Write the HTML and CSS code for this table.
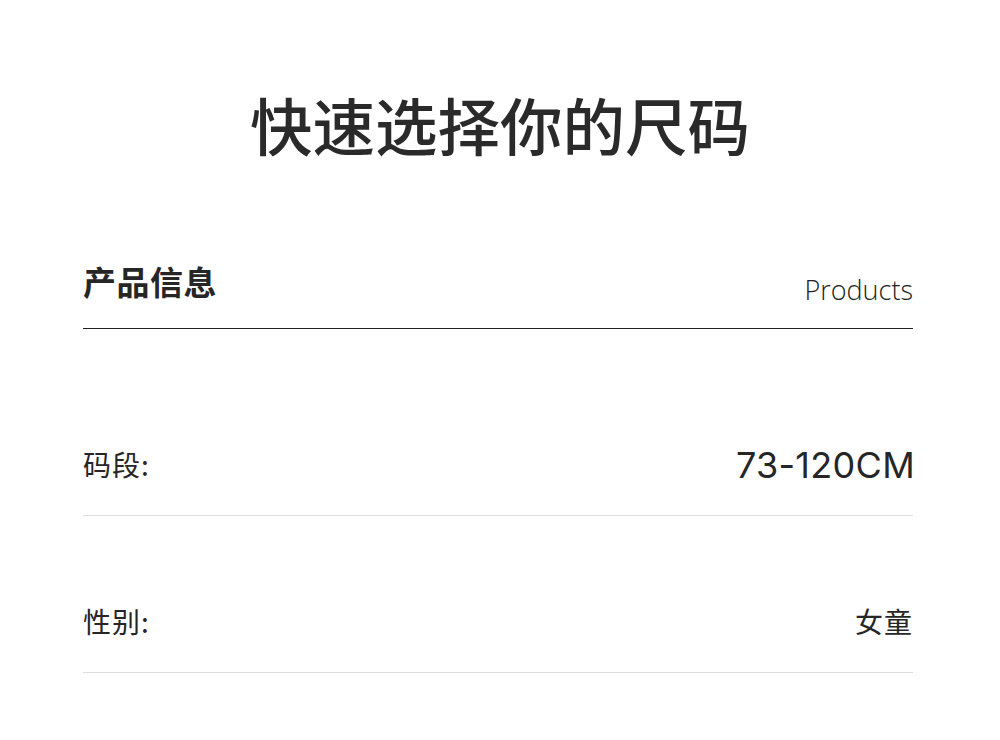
FILE: index.html
```html
<!DOCTYPE html>
<html lang="zh">
<head>
<meta charset="utf-8">
<link rel="stylesheet" href="styles.css">
</head>
<body>
<div class="page">
  <h1 class="title">快速选择你的尺码</h1>
  <div class="head">
    <div class="head-cn">产品信息</div>
    <div class="head-en">Products</div>
  </div>
  <div class="list">
    <div class="row">
      <div class="label">码段:</div>
      <div class="value num">73-120CM</div>
    </div>
    <div class="row">
      <div class="label">性别:</div>
      <div class="value">女童</div>
    </div>
  </div>
</div>
</body>
</html>
```

FILE: styles.css
```css
html, body {
  margin: 0;
  padding: 0;
  background: #ffffff;
}
body {
  font-family: "Noto Sans CJK SC", "Noto Sans", sans-serif;
  color: #262626;
}
.page {
  width: 830px;
  margin: 0 auto;
  display: flex;
  flex-direction: column;
  position: relative;
  left: -2px;
}
.title {
  margin: 88px 0 0 4px;
  height: 72px;
  line-height: 72px;
  font-size: 62.5px;
  font-weight: 500;
  text-align: center;
  color: #2a2a2a;
}
.head {
  margin-top: 99px;
  display: flex;
  justify-content: space-between;
  align-items: flex-end;
  border-bottom: 1px solid #222;
  padding-bottom: 25px;
}
.head-cn {
  font-size: 33px;
  line-height: 44px;
  font-weight: 700;
  letter-spacing: 0.5px;
}
.head-en {
  font-family: "Open Sans", "Noto Sans", sans-serif;
  font-weight: 300;
  font-size: 27px;
  line-height: 30px;
  color: #222;
  margin-bottom: -2px;
}
.list {
  margin-top: 30px;
  display: flex;
  flex-direction: column;
}
.row {
  display: flex;
  justify-content: space-between;
  align-items: center;
  padding: 84px 0 30px 0;
  height: 42px;
  border-bottom: 1px solid #dcdcdc;
}
.label {
  font-size: 28px;
  line-height: 42px;
  font-weight: 400;
  letter-spacing: 1px;
}
.value {
  font-size: 28px;
  line-height: 42px;
  font-weight: 400;
  letter-spacing: 1px;
}
.value.num {
  font-family: "Inter", "Noto Sans", sans-serif;
  font-weight: 400;
  font-size: 36px;
  letter-spacing: 0.3px;
  margin-right: -2px;
  position: relative;
  top: 1px;
}
```
